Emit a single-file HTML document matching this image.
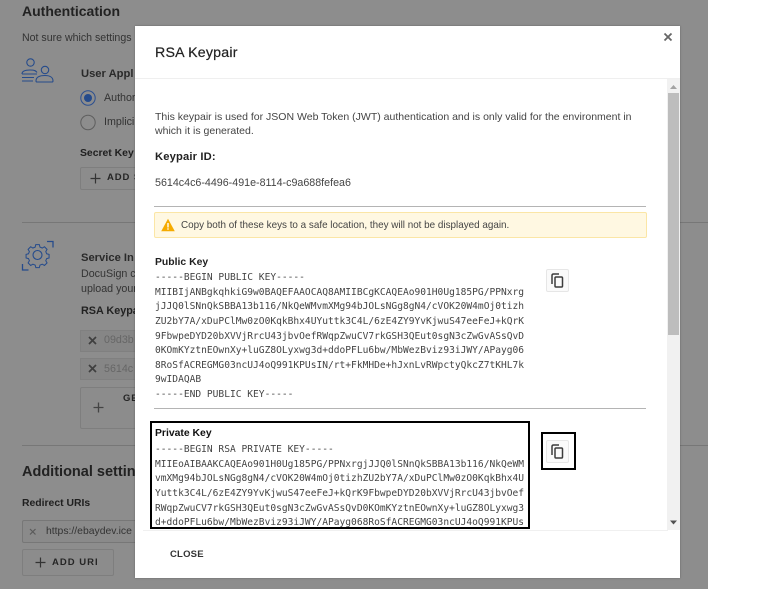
<!DOCTYPE html>
<html><head><meta charset="utf-8"><style>
html,body{margin:0;padding:0;width:780px;height:589px;overflow:hidden;background:#fff}
*{box-sizing:border-box}
body{font-family:"Liberation Sans",sans-serif;position:relative}
#w{position:absolute;left:0;top:0;width:780px;height:589px;overflow:hidden;filter:blur(.3px)}
.a{position:absolute;white-space:nowrap}
.m{font-family:"DejaVu Sans Mono",monospace;font-size:9.58px;line-height:14.62px;color:#444;white-space:pre}
.s{font-size:10.7px;color:#444}
.b{font-weight:bold;font-size:10.4px;color:#1f1f1f}
.btn{position:absolute;border:1px solid #7e7e7e;background:#8c8c8c;border-radius:2px}
.cp{position:absolute;width:23px;height:23px;background:#fafafa;border:1px solid #e6e6e6;border-radius:2px}
</style></head><body><div id="w">
<div class="a" style="left:0;top:0;width:708px;height:589px;background:#8d8d8d"></div>
<div class="a" style="left:22px;top:3px;font-size:14px;font-weight:bold;color:#222;line-height:17px">Authentication</div>
<div class="a" style="left:22px;top:31px;font-size:10.6px;color:#333;line-height:14px">Not sure which settings</div>
<svg class="a" style="left:20px;top:57px" width="36" height="28" fill="none" stroke="#254b8c" stroke-width="1.100"><circle cx="10.500" cy="5.500" r="3.700"/><circle cx="25" cy="13" r="3.700"/><path d="M2 17c0-3 3-4 8-4s6 1 7 2.500M2 17h15M2 20.500h12M2 24h11M16 24c0-4 4-5.500 9-5.500s8 2 8 5.500c0 .8-.5 1-1 1H17c-.7 0-1-.4-1-1z"/></svg>
<div class="a" style="left:81px;top:67px;font-size:11.200px;font-weight:bold;color:#2a2a2a;line-height:14px">User Appl</div>
<svg class="a" style="left:79px;top:89px" width="18" height="42" fill="none"><circle cx="9" cy="9" r="7.200" stroke="#2b4f90"/><circle cx="9" cy="9" r="4" fill="#254b8c"/><circle cx="9" cy="33.500" r="7.200" stroke="#5e5e5e"/></svg>
<div class="a" style="left:104px;top:92px;font-size:10.700px;color:#333;line-height:13px">Author</div>
<div class="a" style="left:104px;top:116px;font-size:10.700px;color:#333;line-height:13px">Implici</div>
<div class="a b" style="left:80px;top:147px;line-height:13px">Secret Key</div>
<div class="btn" style="left:80px;top:167px;width:70px;height:23px"></div>
<svg class="a" style="left:90px;top:173px" width="11" height="11" stroke="#333" stroke-width="1.200"><path d="M5.500 .5v10M.5 5.500h10"/></svg>
<div class="a" style="left:107px;top:172px;font-size:9.500px;font-weight:bold;letter-spacing:.9px;color:#252525;line-height:12px">ADD S</div>
<div class="a" style="left:22px;top:222px;width:686px;height:1px;background:#777"></div>
<svg class="a" style="left:21px;top:239px" width="34" height="33" viewBox="0 0 34 33" fill="none" stroke="#254b8c" stroke-width="1.100"><circle cx="16.500" cy="16" r="4.500"/><path d="M14.500 5l.1 0h3.800l.7 2.700 2.500 1 2.400-1.400 2.800 2.900-1.400 2.400 1 2.400 2.600.7v3.800l-2.600.7-1 2.300 1.400 2.400-2.800 2.800-2.400-1.400-2.500 1-.7 2.700h-3.800l-.7-2.700-2.500-1-2.400 1.400-2.800-2.800 1.400-2.400-1-2.300-2.600-.7v-3.800l2.600-.7 1-2.400-1.400-2.400 2.800-2.900 2.400 1.400 2.500-1z" transform="translate(1.400 1) scale(.92)"/><path d="M26 2.500h6v6M1.500 25v6h6" stroke-width="1.300"/></svg>
<div class="a" style="left:81px;top:251px;font-size:11.200px;font-weight:bold;color:#2a2a2a;line-height:14px">Service In</div>
<div class="a" style="left:81px;top:267px;font-size:10.700px;color:#333;line-height:14.500px">DocuSign c<br>upload your</div>
<div class="a" style="left:81px;top:305px;font-size:10.800px;font-weight:bold;color:#222;line-height:13px">RSA Keypa</div>
<div class="a" style="left:80px;top:330px;width:70px;height:22px;background:#868686;border:1px solid #808080"></div>
<div class="a" style="left:80px;top:358px;width:70px;height:22px;background:#868686;border:1px solid #808080"></div>
<svg class="a" style="left:88px;top:336px" width="9" height="9" stroke="#3f3f3f" stroke-width="1.700"><path d="M1 1l7 7M8 1l-7 7"/></svg>
<svg class="a" style="left:88px;top:364px" width="9" height="9" stroke="#3f3f3f" stroke-width="1.700"><path d="M1 1l7 7M8 1l-7 7"/></svg>
<div class="a" style="left:104px;top:334px;font-size:10.700px;color:#666;line-height:13px">09d3b</div>
<div class="a" style="left:104px;top:363px;font-size:10.700px;color:#666;line-height:13px">5614c</div>
<div class="btn" style="left:80px;top:387px;width:70px;height:42px"></div>
<svg class="a" style="left:93px;top:402px" width="11" height="11" stroke="#444" stroke-width="1.300"><path d="M5.500 .5v10M.5 5.500h10"/></svg>
<div class="a" style="left:123px;top:393px;font-size:9.500px;font-weight:bold;letter-spacing:.9px;color:#252525;line-height:12px">GE</div>
<div class="a" style="left:22px;top:445px;width:686px;height:1px;background:#777"></div>
<div class="a" style="left:22px;top:464px;font-size:14.500px;font-weight:bold;color:#222;line-height:17px">Additional settin</div>
<div class="a b" style="left:22px;top:497px;line-height:13px">Redirect URIs</div>
<div class="a" style="left:22px;top:520px;width:120px;height:23px;background:#8a8a8a;border:1px solid #777;border-radius:2px"></div>
<svg class="a" style="left:29px;top:528px" width="8" height="8" stroke="#5a5a5a" stroke-width="1.200"><path d="M1 1l5.500 5.500M6.500 1L1 6.500"/></svg>
<div class="a" style="left:46px;top:525px;font-size:10.400px;color:#333;line-height:14px">https://ebaydev.ice</div>
<div class="btn" style="left:22px;top:549px;width:92px;height:27px"></div>
<svg class="a" style="left:35px;top:557px" width="11" height="11" stroke="#333" stroke-width="1.200"><path d="M5.500 .5v10M.5 5.500h10"/></svg>
<div class="a" style="left:52px;top:557px;font-size:9.500px;font-weight:bold;letter-spacing:1px;color:#252525;line-height:12px">ADD URI</div>

<div class="a" style="left:135px;top:26px;width:545px;height:552px;background:#fff;box-shadow:0 0 2px rgba(0,0,0,.3)"></div>
<div class="a" style="left:155px;top:44px;font-size:14.200px;color:#222;line-height:18px;letter-spacing:.2px;-webkit-text-stroke:.2px #222">RSA Keypair</div>
<svg class="a" style="left:663px;top:32px" width="10" height="10" stroke="#666" stroke-width="1.800"><path d="M1.500 1.500l7 7M8.500 1.500l-7 7"/></svg>
<div class="a" style="left:135px;top:78px;width:545px;height:1px;background:#efefef"></div>
<div class="a" style="left:155px;top:110px;line-height:14px;font-size:10.520px;color:#444">This keypair is used for JSON Web Token (JWT) authentication and is only valid for the environment in<br>which it is generated.</div>
<div class="a" style="left:155px;top:150px;font-size:11.200px;font-weight:bold;color:#222;line-height:14px;letter-spacing:.15px">Keypair ID:</div>
<div class="a s" style="left:155px;top:176px;line-height:14px">5614c4c6-4496-491e-8114-c9a688fefea6</div>
<div class="a" style="left:154px;top:206px;width:492px;height:1px;background:#b4b4b4"></div>
<div class="a" style="left:154px;top:212px;width:493px;height:26px;background:#fff8e2;border:1px solid #fbe6a6;border-radius:2px"></div>
<svg class="a" style="left:161px;top:218px" width="14" height="14"><path d="M7 .8L13.800 13.200H.2z" fill="#f5ab00"/><rect x="6.300" y="5" width="1.400" height="4.500" fill="#fff"/><rect x="6.300" y="10.300" width="1.400" height="1.400" fill="#fff"/></svg>
<div class="a" style="left:181px;top:219px;line-height:14px;font-size:9.880px;color:#444">Copy both of these keys to a safe location, they will not be displayed again.</div>
<div class="a b" style="left:155px;top:256px;line-height:13px">Public Key</div>
<div class="a m" style="left:155px;top:271px">-----BEGIN PUBLIC KEY-----
MIIBIjANBgkqhkiG9w0BAQEFAAOCAQ8AMIIBCgKCAQEAo901H0Ug185PG/PPNxrg
jJJQ0lSNnQkSBBA13b116/NkQeWMvmXMg94bJOLsNGg8gN4/cVOK20W4mOj0tizh
ZU2bY7A/xDuPClMw0zO0KqkBhx4UYuttk3C4L/6zE4ZY9YvKjwuS47eeFeJ+kQrK
9FbwpeDYD20bXVVjRrcU43jbvOefRWqpZwuCV7rkGSH3QEut0sgN3cZwGvASsQvD
0KOmKYztnEOwnXy+luGZ8OLyxwg3d+ddoPFLu6bw/MbWezBviz93iJWY/APayg06
8RoSfACREGMG03ncUJ4oQ991KPUsIN/rt+FkMHDe+hJxnLvRWpctyQkcZ7tKHL7k
9wIDAQAB
-----END PUBLIC KEY-----</div>
<div class="a" style="left:154px;top:408px;width:492px;height:1px;background:#b4b4b4"></div>
<div class="cp" style="left:546px;top:269px"></div>
<svg class="a" style="left:550px;top:273px" width="15" height="15" fill="none" stroke="#3c3c3c" stroke-width="1.500"><path d="M2 11V2.500Q2 1 3.500 1H9"/><rect x="5" y="4" width="7.500" height="10" rx="1"/></svg>
<div class="a" style="left:150px;top:421px;width:380px;height:108px;border:2px solid #000;overflow:hidden">
<div class="a b" style="left:3px;top:4px;line-height:13px;color:#111">Private Key</div>
<div class="a m" style="left:3px;top:20px">-----BEGIN RSA PRIVATE KEY-----
MIIEoAIBAAKCAQEAo901H0Ug185PG/PPNxrgjJJQ0lSNnQkSBBA13b116/NkQeWM
vmXMg94bJOLsNGg8gN4/cVOK20W4mOj0tizhZU2bY7A/xDuPClMw0zO0KqkBhx4U
Yuttk3C4L/6zE4ZY9YvKjwuS47eeFeJ+kQrK9FbwpeDYD20bXVVjRrcU43jbvOef
RWqpZwuCV7rkGSH3QEut0sgN3cZwGvASsQvD0KOmKYztnEOwnXy+luGZ8OLyxwg3
d+ddoPFLu6bw/MbWezBviz93iJWY/APayg068RoSfACREGMG03ncUJ4oQ991KPUs</div>
</div>
<div class="a" style="left:541px;top:432px;width:35px;height:38px;border:2px solid #000"></div>
<div class="cp" style="left:546px;top:440px"></div>
<svg class="a" style="left:550px;top:444px" width="15" height="15" fill="none" stroke="#3c3c3c" stroke-width="1.500"><path d="M2 11V2.500Q2 1 3.500 1H9"/><rect x="5" y="4" width="7.500" height="10" rx="1"/></svg>
<div class="a" style="left:667px;top:79px;width:13px;height:451px;background:#f1f1f1"></div>
<div class="a" style="left:667.500px;top:93px;width:11.500px;height:242px;background:#bdbdbd"></div>
<svg class="a" style="left:667px;top:83px" width="13" height="8"><path d="M6.500 2L10 6H3z" fill="#a3a3a3"/></svg>
<svg class="a" style="left:667px;top:518px" width="13" height="8"><path d="M3 2.500h7L6.500 6.500z" fill="#505050"/></svg>
<div class="a" style="left:143px;top:530px;width:525px;height:1px;background:#f0f0f0"></div>
<div class="a" style="left:170px;top:549px;font-size:9.500px;font-weight:bold;letter-spacing:.2px;color:#333;line-height:12px">CLOSE</div>
</div></body></html>
